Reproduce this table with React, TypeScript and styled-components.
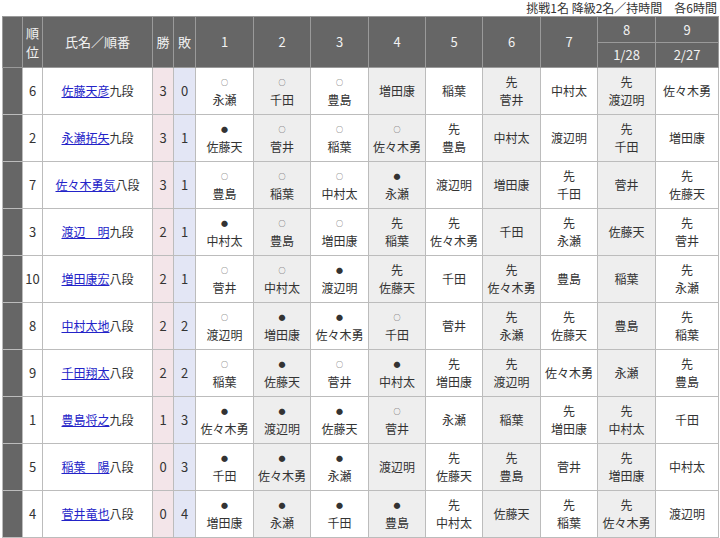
import React from 'react';
import styled, { createGlobalStyle } from 'styled-components';

type Game = { mark?: '○' | '●' | '先'; name: string };

interface Player {
  rank: number;
  name: string;
  dan: string;
  win: number;
  lose: number;
  games: Game[];
}

// 「○永瀬」→ 勝ち、「●」→ 負け、「先」→ 先手（未対局）
const g = (s: string): Game => {
  const c = s.charAt(0);
  if (c === '○' || c === '●' || c === '先') return { mark: c, name: s.slice(1) };
  return { name: s };
};

const rows = (list: string): Game[] => list.split(' ').map(g);

const players: Player[] = [
  { rank: 6, name: '佐藤天彦', dan: '九段', win: 3, lose: 0, games: rows('○永瀬 ○千田 ○豊島 増田康 稲葉 先菅井 中村太 先渡辺明 佐々木勇') },
  { rank: 2, name: '永瀬拓矢', dan: '九段', win: 3, lose: 1, games: rows('●佐藤天 ○菅井 ○稲葉 ○佐々木勇 先豊島 中村太 渡辺明 先千田 増田康') },
  { rank: 7, name: '佐々木勇気', dan: '八段', win: 3, lose: 1, games: rows('○豊島 ○稲葉 ○中村太 ●永瀬 渡辺明 増田康 先千田 菅井 先佐藤天') },
  { rank: 3, name: '渡辺　明', dan: '九段', win: 2, lose: 1, games: rows('●中村太 ○豊島 ○増田康 先稲葉 先佐々木勇 千田 先永瀬 佐藤天 先菅井') },
  { rank: 10, name: '増田康宏', dan: '八段', win: 2, lose: 1, games: rows('○菅井 ○中村太 ●渡辺明 先佐藤天 千田 先佐々木勇 豊島 稲葉 先永瀬') },
  { rank: 8, name: '中村太地', dan: '八段', win: 2, lose: 2, games: rows('○渡辺明 ●増田康 ●佐々木勇 ○千田 菅井 先永瀬 先佐藤天 豊島 先稲葉') },
  { rank: 9, name: '千田翔太', dan: '八段', win: 2, lose: 2, games: rows('○稲葉 ●佐藤天 ○菅井 ●中村太 先増田康 先渡辺明 佐々木勇 永瀬 先豊島') },
  { rank: 1, name: '豊島将之', dan: '九段', win: 1, lose: 3, games: rows('●佐々木勇 ●渡辺明 ●佐藤天 ○菅井 永瀬 稲葉 先増田康 先中村太 千田') },
  { rank: 5, name: '稲葉　陽', dan: '八段', win: 0, lose: 3, games: rows('●千田 ●佐々木勇 ●永瀬 渡辺明 先佐藤天 先豊島 菅井 先増田康 中村太') },
  { rank: 4, name: '菅井竜也', dan: '八段', win: 0, lose: 4, games: rows('●増田康 ●永瀬 ●千田 ●豊島 先中村太 佐藤天 先稲葉 先佐々木勇 渡辺明') },
];

const colWidths = [20, 20, 110, 21, 22, 58, 57, 58, 57, 57, 58, 57, 58, 63];

function App() {
  return (
    <>
      <GlobalStyle />
      <Page>
        <Caption>挑戦1名 降級2名／持時間　各6時間</Caption>
        <League>
          <colgroup>
            {colWidths.map((w, i) => (
              <col key={i} style={{ width: w }} />
            ))}
          </colgroup>
          <thead>
            <HeadRow>
              <Th rowSpan={2} />
              <Th rowSpan={2} $tight>
                順<br />位
              </Th>
              <Th rowSpan={2}>氏名／順番</Th>
              <Th rowSpan={2}>勝</Th>
              <Th rowSpan={2}>敗</Th>
              {[1, 2, 3, 4, 5, 6, 7].map((n) => (
                <Th key={n} rowSpan={2}>
                  {n}
                </Th>
              ))}
              <Th>8</Th>
              <Th>9</Th>
            </HeadRow>
            <SubHeadRow>
              <Th>1/28</Th>
              <Th>2/27</Th>
            </SubHeadRow>
          </thead>
          <tbody>
            {players.map((p) => (
              <BodyRow key={p.name}>
                <Side />
                <NumCell>{p.rank}</NumCell>
                <NameCell>
                  <PlayerLink href='#'>{p.name}</PlayerLink>
                  {p.dan}
                </NameCell>
                <NumCell $tone='win'>{p.win}</NumCell>
                <NumCell $tone='lose'>{p.lose}</NumCell>
                {p.games.map((game, i) => (
                  <GameCell key={i} $shaded={i % 2 === 1}>
                    {game.mark && <Mark $small={game.mark !== '先'}>{game.mark}</Mark>}
                    <Line>{game.name}</Line>
                  </GameCell>
                ))}
              </BodyRow>
            ))}
          </tbody>
        </League>
      </Page>
    </>
  );
}

export default App;

const GlobalStyle = createGlobalStyle`
  body {
    margin: 0;
    background: #fff;
    font-family: "Noto Sans CJK JP", "Noto Sans", sans-serif;
    color: #333;
  }
`;

const Page = styled.div`
  width: 716px;
  padding: 0 2px;
`;

const Caption = styled.div`
  height: 16px;
  padding-top: 1px;
  box-sizing: border-box;
  line-height: 14px;
  text-align: right;
  font-size: 12px;
  color: #333;
  padding-right: 1px;
`;

const League = styled.table`
  width: 716px;
  table-layout: fixed;
  border-collapse: collapse;
  border: 1px solid #b4b4b4;
`;

const HeadRow = styled.tr`
  height: 26px;
`;

const SubHeadRow = styled.tr`
  height: 25px;
`;

const Th = styled.th<{ $tight?: boolean }>`
  background: #666;
  color: #f2f2f2;
  font-weight: 400;
  font-size: 13px;
  line-height: ${({ $tight }) => ($tight ? '19px' : '18px')};
  text-align: center;
  vertical-align: middle;
  padding: 0;
  border: 1px solid #9a9a9a;
`;

const BodyRow = styled.tr`
  height: 47px;
`;

const Td = styled.td`
  padding: 0;
  text-align: center;
  vertical-align: middle;
  border: 1px solid #bcbcbc;
  font-size: 12px;
  line-height: 18px;
`;

const Side = styled(Td)`
  background: #666;
`;

const NumCell = styled(Td)<{ $tone?: 'win' | 'lose' }>`
  font-size: 13px;
  background: ${({ $tone }) =>
    $tone === 'win' ? '#f3e5e9' : $tone === 'lose' ? '#e3e6f5' : '#fff'};
`;

const NameCell = styled(Td)`
  font-size: 12px;
  white-space: nowrap;
`;

const PlayerLink = styled.a`
  color: #2323c8;
  text-decoration: underline;
`;

const GameCell = styled(Td)<{ $shaded: boolean }>`
  background: ${({ $shaded }) => ($shaded ? '#eeeeee' : '#fff')};
`;

const Mark = styled.span<{ $small: boolean }>`
  display: block;
  height: 18px;
  line-height: 18px;
  font-size: ${({ $small }) => ($small ? '7px' : '12px')};
`;

const Line = styled.span`
  display: block;
  white-space: nowrap;
`;
